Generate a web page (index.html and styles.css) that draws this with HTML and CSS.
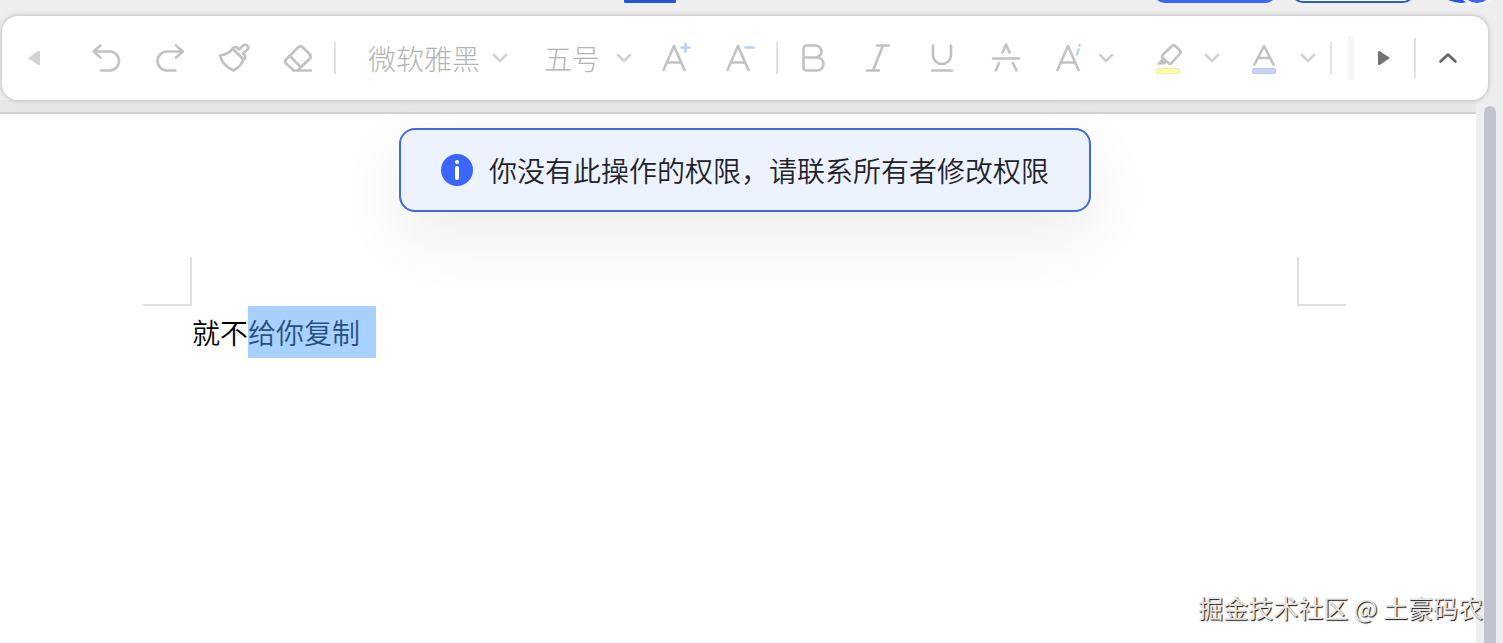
FILE: index.html
```html
<!DOCTYPE html>
<html lang="zh-CN">
<head>
<meta charset="utf-8">
<title>文档</title>
<link rel="stylesheet" href="styles.css">
</head>
<body>
<svg class="defs" aria-hidden="true">
  <symbol id="chevron" viewBox="0 0 24 24"><path d="M6 9l6 6 6-6"/></symbol>
</svg>
<div class="app">
  <header class="topbar">
    <span class="tab-mark"></span>
    <div class="actions">
      <button class="pill primary" type="button" aria-label="分享"></button>
      <button class="pill outline" type="button" aria-label="操作"></button>
      <div class="avatars"><span class="avatar"></span><span class="badge"></span></div>
    </div>
  </header>

  <div class="toolbar" role="toolbar">
    <button class="tool first" type="button" aria-label="向左滚动"><svg class="icon" viewBox="0 0 32 32"><path class="fill-light" d="M10 16L20 9Q22 8.500 22 10V22Q22 23.500 20 23Z"/></svg></button>
    <button class="tool" type="button" aria-label="撤销"><svg class="icon" viewBox="0 0 32 32"><path d="M10.500 3.500L3.500 9.500l7 6M4 9.500h15.500a9.500 9.500 0 0 1 0 19H11"/></svg></button>
    <button class="tool" type="button" aria-label="重做"><svg class="icon" viewBox="0 0 32 32"><path d="M22 3.500l7 6-7 6M28.500 9.500H13a9.500 9.500 0 0 0 0 19H21.500"/></svg></button>
    <button class="tool" type="button" aria-label="格式刷"><svg class="icon" viewBox="0 0 32 32"><path d="M14.500 6.500C11.500 11.500 7 13 2 13.500C3.500 20 9 25.500 15.500 28.500C20 26 24 22 25.500 17.500ZM14.500 6.500C16 4.500 18 4.500 19.500 6L21 7.500L25.500 3.300C28 1 32 5 29.500 7.500L25 11.500L26.500 13C28 14.500 27.500 16.500 25.500 17.500"/></svg></button>
    <button class="tool" type="button" aria-label="清除格式"><svg class="icon" viewBox="0 0 32 32"><path d="M12 28.500L4 21.500Q2 19.500 4 17.500L16 5.500Q18.500 3 21 5.500L27.500 12Q30 14.500 27.500 17L15.500 28.500M8.500 14.500L18.500 25M11 28.500H29"/></svg></button>
    <span class="sep"></span>
    <label class="picker font"><select aria-label="字体" disabled><option>微软雅黑</option></select><svg class="chev"><use href="#chevron"/></svg></label>
    <label class="picker size"><select aria-label="字号" disabled><option>五号</option></select><svg class="chev"><use href="#chevron"/></svg></label>
    <button class="tool" type="button" aria-label="增大字号"><svg class="icon" viewBox="0 0 32 32"><path d="M3.500 28L14 4l10.500 24M7.500 20.500h13.500"/><path class="blue" d="M21.500 5.500h8M25.500 1.500v8"/></svg></button>
    <button class="tool" type="button" aria-label="减小字号"><svg class="icon" viewBox="0 0 32 32"><path d="M3.500 28L14 4l10.500 24M7.500 20.500h13.500"/><path class="blue" d="M21.500 5.500h8"/></svg></button>
    <span class="sep"></span>
    <button class="tool" type="button" aria-label="加粗"><svg class="icon" viewBox="0 0 32 32"><path d="M5.500 15.500V7Q5.500 3.500 9 3.500H17.500a6 6 0 0 1 0 12H5.500V25Q5.500 28.500 9 28.500H19a6.500 6.500 0 0 0 0-13H17"/></svg></button>
    <button class="tool" type="button" aria-label="斜体"><svg class="icon" viewBox="0 0 32 32"><path d="M15 3.500h12M5 28.500h12M21 3.500L11 28.500"/></svg></button>
    <button class="tool" type="button" aria-label="下划线"><svg class="icon" viewBox="0 0 32 32"><path d="M7 3.500V13a9 9 0 0 0 18 0V3.500M6 28.500h20"/></svg></button>
    <button class="tool" type="button" aria-label="删除线"><svg class="icon" viewBox="0 0 32 32"><path d="M12.500 10.500L16 2.500l3.500 8M3 16.500h26M9 21l-3 7.500M23 21l3.500 7.500"/></svg></button>
    <div class="split effects">
      <button type="button" aria-label="文字效果"><svg class="icon" viewBox="0 0 32 32"><path d="M3.500 28L14 4l10.500 24M7.500 20.500h13.500"/><path class="sky" d="M24.500 7.500L23 12.500M25.600 3l-.2.500"/></svg></button>
      <button class="more" type="button" aria-label="更多文字效果"><svg class="chev"><use href="#chevron"/></svg></button>
    </div>
    <div class="split">
      <button type="button" aria-label="突出显示"><svg class="icon" viewBox="0 0 32 32"><path d="M11 12.500L20 4Q21.500 2.500 23 4L28 8.500Q29.500 10 28 11.500L19.500 21Q18 22.500 16.500 21L11 16.500Q9.500 14.500 11 12.500Z"/><path class="fill" d="M9.500 17L4.500 22.500H12.500L14.500 21Z"/><rect class="yellow" x="4.500" y="26.500" width="23" height="5" rx="1.500"/></svg></button>
      <button class="more" type="button" aria-label="突出显示颜色"><svg class="chev"><use href="#chevron"/></svg></button>
    </div>
    <div class="split">
      <button type="button" aria-label="字体颜色"><svg class="icon" viewBox="0 0 32 32"><path d="M6.500 22.500L16 4l9.500 18.500M10.500 16h11"/><rect class="lilac" x="4.500" y="26.500" width="23" height="5" rx="1.500"/></svg></button>
      <button class="more" type="button" aria-label="更多字体颜色"><svg class="chev"><use href="#chevron"/></svg></button>
    </div>
    <span class="sep end"></span>
    <div class="tail">
      <span class="fade"></span>
      <button class="tool scroll" type="button" aria-label="向右滚动"><svg class="icon" viewBox="0 0 32 32"><path class="fill-dark" d="M22 16L12 9.300Q10 8.500 10 10V22Q10 23.500 12 22.700Z"/></svg></button>
      <span class="sep tall"></span>
      <button class="tool" type="button" aria-label="收起工具栏"><svg class="icon" viewBox="0 0 32 32"><path class="dark" d="M8.500 19.500L16 12.500l7.500 7"/></svg></button>
    </div>
  </div>

  <div class="workspace">
    <main class="paper">
      <div class="page">
        <div class="marks"><span class="mark left"></span><span class="mark right"></span></div>
        <p class="line">就不<span class="selected">给你复制</span></p>
      </div>
    </main>
    <div class="scrollbar"><div class="thumb"></div></div>
    <div class="overlay">
      <div class="toast" role="alert">
        <svg class="info" viewBox="0 0 32 32"><circle class="disc" cx="16" cy="16" r="16"/><circle class="dot" cx="16" cy="8" r="2"/><path class="stem" d="M16 14v10"/></svg>
        <span>你没有此操作的权限，请联系所有者修改权限</span>
      </div>
    </div>
    <div class="watermark">掘金技术社区 @ 土豪码农</div>
  </div>
</div>
</body>
</html>
```
FILE: styles.css
```css
* { box-sizing: border-box; }

body {
  margin: 0;
  overflow: hidden;
  background: #eeeeee;
  color: #1f2329;
  font-family: "Noto Sans CJK SC", sans-serif;
  font-size: 28px;
}

.defs { position: absolute; width: 0; height: 0; }

button {
  display: flex;
  align-items: center;
  justify-content: center;
  margin: 0;
  padding: 0;
  border: 0;
  background: none;
}

.app {
  display: flex;
  flex-direction: column;
  height: 100vh;
}

/* Lower edge of the header controls */
.topbar {
  display: grid;
  grid-template-columns: 13fr 52px 17fr;
  align-items: end;
  flex: none;
  height: 16px;
  padding: 0 10px 13px 0;
}

.tab-mark {
  grid-column: 2;
  height: 3px;
  border-radius: 0 0 1px 1px;
  background: #2456d6;
}

.actions {
  display: flex;
  align-items: flex-end;
  justify-content: flex-end;
  gap: 14px;
  height: 3px;
}

.pill {
  flex: none;
  width: 124px;
  height: 56px;
  border-radius: 12px;
}

.primary { background: #3b66fb; }
.outline { border: 2px solid #2c5bc9; background: #ffffff; }

.avatars {
  display: flex;
  align-items: flex-end;
  margin-left: 4px;
}

.avatar {
  width: 56px;
  height: 56px;
  border-radius: 50%;
  background: #2456d6;
  margin-right: -28px;
}

.badge {
  width: 32px;
  height: 32px;
  border-radius: 50%;
  background: #3b66fb;
  box-shadow: 0 0 0 3px #f4f4f8;
}

.toolbar {
  position: relative;
  z-index: 1;
  display: flex;
  align-items: center;
  flex: none;
  height: 84px;
  margin: 0 15px 0 2px;
  border-radius: 16px;
  background: #ffffff;
  box-shadow: 0 0 4px 1px #c2c2c2;
}

.tool {
  flex: none;
  width: 64px;
  height: 64px;
}

.first { margin-right: 8px; }

.icon {
  width: 32px;
  height: 32px;
  fill: none;
  stroke: #c2c2c2;
  stroke-width: 2.6;
  stroke-linecap: round;
  stroke-linejoin: round;
}

.icon .blue { stroke: #bdcdfb; }
.icon .sky { stroke: #b5d5fb; }
.icon .dark { stroke: #666666; }
.icon .fill { fill: #c0c0c0; stroke: none; }
.icon .fill-light { fill: #d2d2d2; stroke: none; }
.icon .fill-dark { fill: #737373; stroke: none; }
.icon .yellow { fill: #fafaa8; stroke: #eeee9c; stroke-width: 1; }
.icon .lilac { fill: #c5d3f8; stroke: #b8c8f0; stroke-width: 1; }

.chev {
  flex: none;
  width: 24px;
  height: 24px;
  fill: none;
  stroke: #d0d0d0;
  stroke-width: 2.5;
  stroke-linecap: round;
  stroke-linejoin: round;
}

.sep {
  flex: none;
  width: 2px;
  height: 32px;
  margin: 0 4px;
  background: #e2e2e2;
}

.picker {
  display: flex;
  align-items: center;
  flex: none;
}

.picker select {
  flex: 1;
  min-width: 0;
  height: 48px;
  padding: 0;
  border: 0;
  appearance: none;
  background: none;
  color: #b4b4b4;
  opacity: 1;
  font: inherit;
  font-weight: 300;
}

.font { width: 144px; margin: 0 32px 0 28px; }
.size { width: 92px; margin-right: 8px; }

.split { display: flex; flex: none; width: 96px; height: 64px; }
.split button { width: 56px; padding: 0 8px 0 16px; }
.split .more { width: 40px; padding: 0; }
.effects { margin-right: 2px; }
.effects button { width: 48px; padding: 0 0 0 16px; }

.end { margin: 0 2px; }

.tail {
  display: flex;
  align-items: center;
  margin-left: auto;
  padding-right: 8px;
}

.fade { width: 6px; height: 44px; background: #f6f6f6; }
.scroll { width: 60px; }
.tall { height: 40px; margin: 0; }

.workspace {
  position: relative;
  display: flex;
  flex: 1;
  min-height: 0;
  background: #e7e7e7;
}

.paper {
  flex: 1;
  margin-top: 12px;
  padding: 143px 130px 0 143px;
  border-top: 2px solid #d3d3d3;
  background: #ffffff;
}

.marks { display: flex; justify-content: space-between; }

.mark {
  width: 49px;
  height: 49px;
  border: 0 solid #e0e0e0;
  border-bottom-width: 2px;
}

.left { border-right-width: 2px; }
.right { border-left-width: 2px; }

.line {
  display: flex;
  margin: 0;
  padding-left: 49px;
  color: #000000;
  line-height: 52px;
  font-weight: 350;
}

.selected {
  padding-right: 16px;
  background: #a8d1ff;
  color: #27507f;
}

.scrollbar {
  display: flex;
  flex: none;
  width: 27px;
  padding: 6px 7px 0 8px;
  background: #eeeeee;
}

.thumb {
  flex: 1;
  border-radius: 6px 6px 0 0;
  background: #c1c4d0;
}

.overlay {
  position: absolute;
  top: 28px;
  left: 0;
  right: 13px;
  display: flex;
  justify-content: center;
}

.toast {
  display: flex;
  align-items: center;
  gap: 16px;
  height: 84px;
  padding: 0 40px;
  border: 2px solid #4169e1;
  border-radius: 16px;
  background: #ecf3ff;
  box-shadow: 0 24px 64px rgba(0, 0, 0, 0.08);
  font-weight: 350;
  white-space: nowrap;
}

.info { width: 32px; height: 32px; }
.disc { fill: #3b66fb; }
.dot { fill: #ffffff; }
.stem { stroke: #ffffff; stroke-width: 4; stroke-linecap: round; }

.watermark {
  position: absolute;
  right: 20px;
  bottom: 18px;
  color: #e6e6e6;
  font-size: 25px;
  line-height: 36px;
  text-shadow: 1px 1px 1px #111111;
}
```
